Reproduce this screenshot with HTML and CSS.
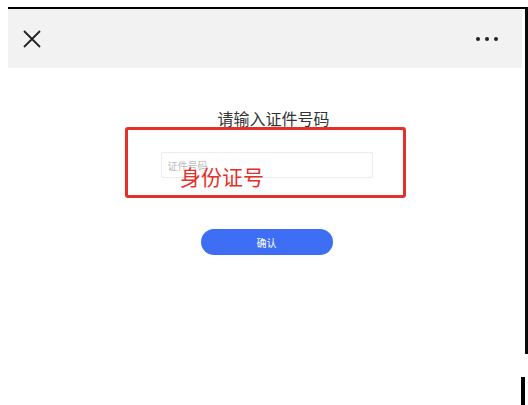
FILE: index.html
```html
<!DOCTYPE html>
<html lang="zh">
<head>
<meta charset="utf-8">
<link rel="stylesheet" href="styles.css">
</head>
<body>
<div class="frame">
  <header class="bar">
    <svg class="close" width="20" height="20" viewBox="0 0 20 20"><path d="M2 2 L18 18 M18 2 L2 18" stroke="#222" stroke-width="1.8" fill="none"/></svg>
    <div class="more"><span></span><span></span><span></span></div>
  </header>
  <main class="content">
    <h1 class="title">请输入证件号码</h1>
    <div class="field"><input class="input" placeholder="证件号码"></div>
    <button class="confirm">确认</button>
    <div class="note"><span class="note-text">身份证号</span></div>
  </main>
</div>
<div class="edge-mark"></div>
</body>
</html>
```
FILE: styles.css
```css
html, body {
  margin: 0;
  padding: 0;
  background: #fff;
  font-family: "Noto Sans CJK SC", "Noto Sans", sans-serif;
}
body {
  width: 528px;
  height: 405px;
  overflow: hidden;
  position: relative;
}
.frame {
  margin: 7px 0 0 8px;
  width: 517px;
  height: 345px;
  border-top: 2px solid #000;
  border-right: 3px solid #0a0a0a;
  box-sizing: content-box;
}
.bar {
  height: 59px;
  background: #f2f2f2;
  display: flex;
  align-items: center;
  justify-content: space-between;
  padding: 0 24px 0 14px;
  margin-right: 3px;
}
.close {
  display: block;
  margin-top: 1px;
}
.more {
  display: flex;
  gap: 5px;
  margin-top: 1px;
}
.more span {
  width: 4px;
  height: 4px;
  border-radius: 50%;
  background: #222;
}
.content {
  position: relative;
  display: flex;
  flex-direction: column;
  align-items: center;
}
.title {
  margin: 40px 0 0 14px;
  font-size: 16px;
  line-height: 20px;
  font-weight: normal;
  color: #333;
}
.field {
  margin-top: 24px;
}
.input {
  display: block;
  width: 212px;
  height: 26px;
  box-sizing: border-box;
  border: 1px solid #ececec;
  border-radius: 2px;
  padding: 0 6px;
  font-family: "Noto Sans CJK SC", sans-serif;
  font-size: 10px;
  color: #999;
  outline: none;
  background: #fff;
}
.input::placeholder {
  color: #bbb;
}
.confirm {
  margin-top: 51px;
  width: 132px;
  height: 26px;
  border: none;
  border-radius: 13px;
  background: #3d6ef4;
  color: #fff;
  font-family: "Noto Sans CJK SC", sans-serif;
  font-size: 10px;
  padding: 0;
}
.note {
  position: absolute;
  left: 117px;
  top: 59px;
  width: 281px;
  height: 71px;
  box-sizing: border-box;
  border: 3px solid #e4302b;
  border-radius: 3px;
  padding: 34px 0 0 52px;
}
.note-text {
  display: block;
  font-size: 21px;
  line-height: 24px;
  color: #e4302b;
}
.edge-mark {
  position: absolute;
  left: 521px;
  top: 377px;
  width: 4px;
  height: 28px;
  background: #000;
}
```
